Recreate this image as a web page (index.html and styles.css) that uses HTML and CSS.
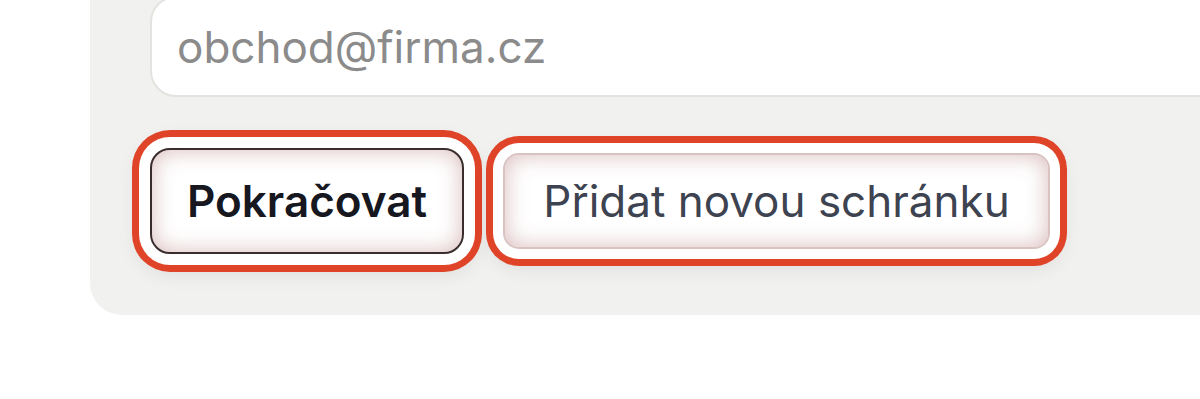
FILE: index.html
```html
<!DOCTYPE html>
<html lang="cs">
<head>
  <meta charset="UTF-8">
  <title>Schránka</title>
  <meta name="viewport" content="width=device-width, initial-scale=1.0">
  <link rel="stylesheet" href="styles.css">
</head>
<body>

  <div class="panel">
    <input class="mail-input" type="email" placeholder="obchod@firma.cz">

    <div class="actions">
      <button class="btn btn-primary">Pokračovat</button>
      <button class="btn btn-secondary">Přidat novou schránku</button>
    </div>
  </div>

</body>
</html>
```

FILE: styles.css
```css
body {
  margin: 0;
  font-family: 'Inter', 'Noto Sans', sans-serif;
  background-color: #fff;
  overflow: hidden;
}

.panel {
  margin: -24px 0 0 90px;
  padding: 20px 0 61px 60px;
  background-color: #f1f1ef;
  border-radius: 0 0 0 32px;
}

.mail-input {
  display: block;
  box-sizing: border-box;
  width: calc(100% + 60px);
  height: 101px;
  padding: 0 25px;
  border: 2px solid #e3e3e0;
  border-radius: 26px;
  background: #fff;
  font-family: inherit;
  font-size: 44px;
  color: #222;
  outline: none;
}

.mail-input::placeholder {
  color: #8b8b8b;
}

.actions {
  display: flex;
  align-items: center;
  gap: 39px;
  margin-top: 51px;
}

.btn {
  box-sizing: border-box;
  padding: 0;
  font-family: inherit;
  font-size: 44px;
  background: #fff;
  cursor: pointer;
}

.btn-primary {
  width: 314px;
  height: 106px;
  border: 2px solid #3b2d2d;
  border-radius: 20px;
  font-weight: 600;
  color: #17171f;
  box-shadow: 0 0 0 11px #fff, 0 0 0 18px #df4429, 0 6px 18px 16px rgba(0, 0, 0, 0.07),
    inset 0 0 22px rgba(170, 105, 105, 0.45);
}

.btn-secondary {
  width: 547px;
  height: 96px;
  border: 2px solid #d9c3c1;
  border-radius: 16px;
  font-weight: 400;
  color: #3d4350;
  box-shadow: 0 0 0 10px #fff, 0 0 0 17px #df4429, 0 6px 18px 15px rgba(0, 0, 0, 0.07),
    inset 0 0 22px rgba(170, 105, 105, 0.45);
}
```
